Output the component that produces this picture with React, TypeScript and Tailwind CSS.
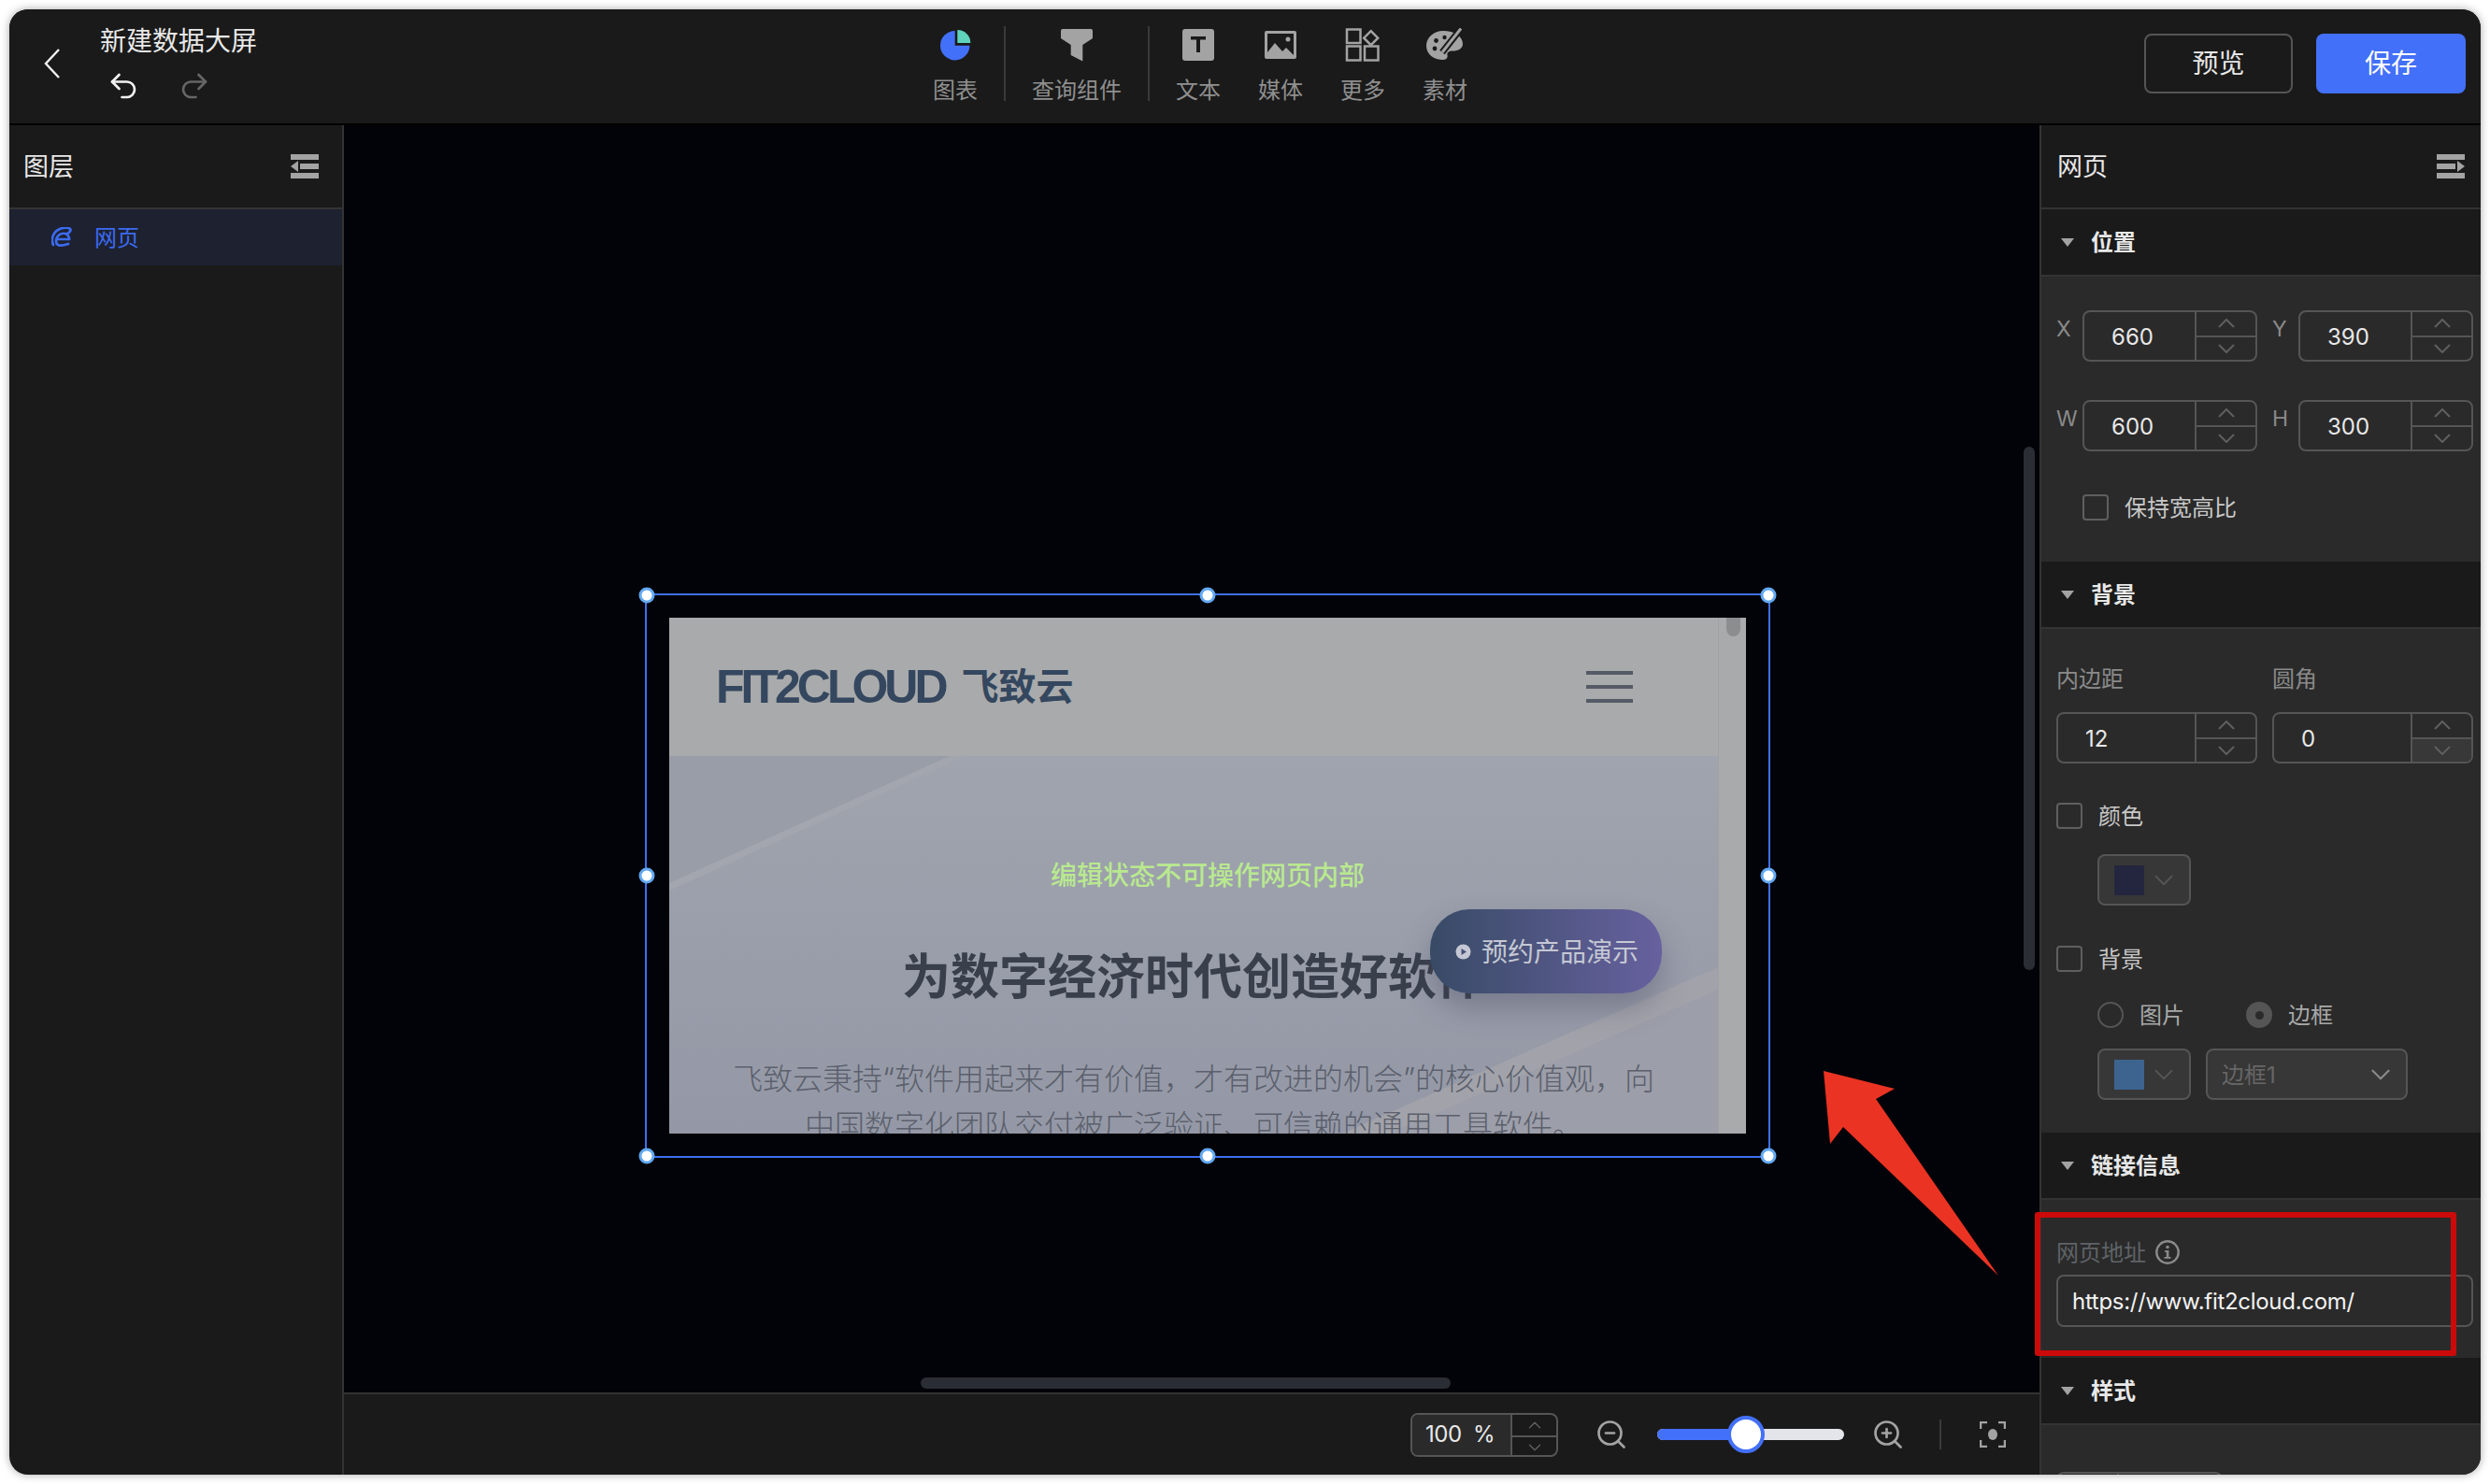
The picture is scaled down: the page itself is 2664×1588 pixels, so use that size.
import type { ReactNode } from 'react'
import { ChevronDown, ChevronUp, Redo2, Undo2, ZoomIn, ZoomOut } from 'lucide-react'

const font = "font-['Inter','Noto_Sans_CJK_SC',sans-serif]"

function ChartIcon() {
  return (
    <svg width="34" height="36" viewBox="0 0 34 36">
      <path d="M16.7 3 A15.7 15.7 0 1 0 32.4 18.7 H16.7 Z" fill="#4370f8" />
      <path d="M19.3 2 A14 14 0 0 1 33.3 16 H19.3 Z" fill="#5fd3bb" />
    </svg>
  )
}

function FunnelIcon() {
  return (
    <svg width="34" height="36" viewBox="0 0 34 36">
      <path d="M2 1 H32 Q34 1 34 3 V11 L23.3 18 V35.5 L10.7 29 V18 L0 11 V3 Q0 1 2 1 Z" fill="#a3a3a3" />
    </svg>
  )
}

function TextIcon() {
  return (
    <svg width="34" height="36" viewBox="0 0 34 36">
      <rect x="0" y="1" width="34" height="34" rx="3" fill="#a3a3a3" />
      <rect x="9" y="9" width="16" height="3.5" fill="#1a1a1a" />
      <rect x="15" y="9" width="4" height="17" fill="#1a1a1a" />
    </svg>
  )
}

function MediaIcon() {
  return (
    <svg width="34" height="36" viewBox="0 0 34 36">
      <rect x="0" y="3" width="34" height="30" rx="2" fill="#a3a3a3" />
      <rect x="3" y="6" width="28" height="24" fill="#1a1a1a" />
      <path d="M3 26 L11 16 L19 25 L23 21 L31 29 V30 H3 Z" fill="#a3a3a3" />
      <circle cx="25" cy="12" r="2.5" fill="#a3a3a3" />
    </svg>
  )
}

function MoreIcon() {
  return (
    <svg width="38" height="36" viewBox="0 0 38 36" fill="none" stroke="#a3a3a3" strokeWidth="2.5">
      <rect x="2" y="1.5" width="14.5" height="14.5" />
      <path d="M27.7 3.2 L35.2 10.7 L27.7 18.2 L20.2 10.7 Z" />
      <rect x="2" y="19.5" width="14.5" height="15" />
      <rect x="21" y="19.5" width="14.5" height="15" />
    </svg>
  )
}

function PaletteIcon() {
  return (
    <svg width="40" height="36" viewBox="0 0 40 36">
      <path d="M18 3 C8 3 0 10 0 19 C0 28 8 34 18 34 C22 34 23 31 22.5 29 C22 26 24 24.5 28 24.5 C34 24.5 39 22 39 17 C39 9 30 3 18 3 Z" fill="#a3a3a3" />
      <circle cx="10.5" cy="13.5" r="2.4" fill="#1a1a1a" />
      <circle cx="9" cy="22" r="2.4" fill="#1a1a1a" />
      <circle cx="19.5" cy="10" r="2.2" fill="#1a1a1a" />
      <path d="M17 26 L36 2" stroke="#1a1a1a" strokeWidth="7" />
      <path d="M17 26 L37 0.5" stroke="#a3a3a3" strokeWidth="3" />
    </svg>
  )
}

function WebIcon() {
  return (
    <svg width="22" height="23" viewBox="0 0 22 23" fill="none" stroke="#3b6bf0" strokeWidth="2.7" strokeLinecap="round">
      <path d="M19 13 C19 8 15 6 11 7 C7 8 5 12 5 15 C5 20 9 21 18 18" />
      <path d="M5.5 13 H19" />
      <path d="M2 19 C-0.5 14 1 6 8 2.5 C12 0.5 18 0 20 2 C21.5 3.5 19 6 17 7" />
    </svg>
  )
}

function InfoIcon() {
  return (
    <svg width="26" height="26" viewBox="0 0 26 26" fill="#8a8a8a" className="ml-[10px]">
      <circle cx="13" cy="13" r="11.7" fill="none" stroke="#8a8a8a" strokeWidth="2.4" />
      <circle cx="13" cy="7.5" r="1.8" />
      <rect x="11.8" y="11" width="2.6" height="8" />
      <rect x="10" y="11" width="3" height="1.8" />
      <rect x="9.5" y="18" width="7" height="1.8" />
    </svg>
  )
}

function LayerIcon({ flip }: { flip?: boolean }) {
  return (
    <svg width="30" height="26" viewBox="0 0 30 26" className={flip ? '-scale-x-100' : ''} fill="#a3a3a3">
      <rect x="0" y="0" width="30" height="6" />
      <rect x="10" y="10" width="20" height="6" />
      <path d="M8 7 V19 L0 13 Z" />
      <rect x="0" y="20" width="30" height="6" />
    </svg>
  )
}

function Chevron({ up }: { up?: boolean }) {
  return (
    <svg width="18" height="10" viewBox="0 0 18 10" fill="none" stroke="#5f5f5f" strokeWidth="2">
      <path d={up ? 'M1 9 L9 1 L17 9' : 'M1 1 L9 9 L17 1'} />
    </svg>
  )
}

function Tool({ icon, label }: { icon: ReactNode; label: string }) {
  return (
    <div className="flex flex-col items-center">
      <div className="flex h-[36px] items-center justify-center">{icon}</div>
      <span className="mt-[15px] text-[24px] leading-[32px] text-[#8f8f8f]">{label}</span>
    </div>
  )
}

function Stepper({ value, className, downActive }: { value: string; className: string; downActive?: boolean }) {
  return (
    <div className={`flex h-[55px] shrink-0 overflow-hidden rounded-lg border-2 border-[#555555] ${className}`}>
      <div className="flex flex-1 items-center pt-[2px] pl-[29px] text-[24px] text-[#e8e8e8]">{value}</div>
      <div className="flex w-[65px] flex-col border-l-2 border-[#555555]">
        <div className="flex flex-1 items-center justify-center border-b-2 border-[#555555]">
          <Chevron up />
        </div>
        <div className={`flex flex-1 items-center justify-center ${downActive ? 'bg-[#383838]' : ''}`}>
          <Chevron />
        </div>
      </div>
    </div>
  )
}

function Field({ label, value }: { label: string; value: string }) {
  return (
    <div className="flex w-[231px] shrink-0">
      <span className="w-[28px] text-[23px] leading-[40px] text-[#8a8a8a]">{label}</span>
      <Stepper value={value} className="w-[187px]" />
    </div>
  )
}

function Section({ title, children }: { title: string; children: ReactNode }) {
  return (
    <section>
      <div className="flex h-[72px] items-center border-b-2 border-[#333333] bg-[#1a1a1a] pl-[21px]">
        <span className="h-0 w-0 border-x-[7px] border-t-[9px] border-x-transparent border-t-[#a3a3a3]" />
        <span className="ml-[18px] pt-[2px] text-[24px] font-bold text-[#e8e8e8]">{title}</span>
      </div>
      <div className="bg-[#2a2a2a] pr-[8px] pl-[16px]">{children}</div>
    </section>
  )
}

function Check({ label }: { label: string }) {
  return (
    <div className="flex h-[32px] items-center">
      <span className="h-[28px] w-[28px] rounded-[4px] border-2 border-[#5f5f5f]" />
      <span className="ml-[17px] pt-[2px] text-[24px] text-[#c8c8c8]">{label}</span>
    </div>
  )
}

function Swatch({ color }: { color: string }) {
  return (
    <div className="flex h-[55px] w-[100px] items-center rounded-lg border-2 border-[#555555] bg-[#373737] pl-[16px]">
      <span className={`h-[32px] w-[32px] ${color}`} />
      <ChevronDown size={34} strokeWidth={1.3} className="ml-[4px] text-[#555555]" />
    </div>
  )
}

function Handle({ className }: { className: string }) {
  return (
    <span className={`absolute h-[17px] w-[17px] -translate-x-1/2 -translate-y-1/2 rounded-full border-[3px] border-[#62a8f2] bg-white ${className}`} />
  )
}

function WebPreview() {
  return (
    <div className="relative flex h-full overflow-hidden bg-[#a9aaab]">
      <div className="flex min-w-0 flex-1 flex-col">
        <div className="flex h-[148px] shrink-0 items-center justify-between bg-[#a9aaab] pr-[91px] pl-[50px]">
          <div className="flex items-center text-[#34475f]">
            <span className="font-['Liberation_Sans',sans-serif] text-[50px] font-bold tracking-[-4px]">FIT2CLOUD</span>
            <span className="ml-[18px] text-[40px] font-bold">飞致云</span>
          </div>
          <div className="flex w-[50px] flex-col gap-[11px]">
            <span className="h-[4px] bg-[#555b66]" />
            <span className="h-[4px] bg-[#555b66]" />
            <span className="h-[4px] bg-[#555b66]" />
          </div>
        </div>
        <div className="relative flex-1 overflow-hidden bg-gradient-to-b from-[#a0a4ae] to-[#9498a6] text-center">
          <svg className="absolute inset-0 h-full w-full" viewBox="0 0 1122 404" preserveAspectRatio="none">
            <path d="M0 0 H300 L0 136 Z" fill="#989da8" />
            <path d="M0 136 L300 0 H316 L0 144 Z" fill="#a3a6ae" />
            <path d="M1122 226 L720 404 H1122 Z" fill="#9c9ea9" />
            <path d="M1122 226 L720 404 H770 L1122 250 Z" fill="#a2a3aa" />
          </svg>
          <div className="relative pt-[201px]">
            <div className="text-[52px] leading-[72px] font-bold whitespace-nowrap text-[#3a3f4c]">为数字经济时代创造好软件</div>
            <div className="mt-[48px] text-[32px] leading-[50px] font-light whitespace-nowrap text-[#5b606c]">
              <div>飞致云秉持“软件用起来才有价值，才有改进的机会”的核心价值观，向</div>
              <div>中国数字化团队交付被广泛验证、可信赖的通用工具软件。</div>
            </div>
          </div>
        </div>
      </div>
      <div className="w-[30px] shrink-0 border-l border-[#a0a1a3] bg-[#a9aaab] pl-[8px]">
        <div className="h-[20px] w-[15px] rounded-b-full bg-[#8c8d8f]" />
      </div>
      <div className="absolute top-[255px] left-0 w-full text-center text-[28px] font-medium text-[#b9e98f]">编辑状态不可操作网页内部</div>
      <div className="absolute top-[312px] left-[814px] flex h-[90px] w-[248px] items-center rounded-[42px] bg-gradient-to-r from-[#384a66] to-[#67619f] pl-[27px] shadow-[0_16px_30px_rgba(60,62,90,0.35)]">
        <svg width="17" height="17" viewBox="0 0 17 17">
          <circle cx="8.5" cy="8.5" r="8" fill="#c5c8d4" />
          <path d="M6.5 5 L12 8.5 L6.5 12 Z" fill="#4a4f78" />
        </svg>
        <span className="ml-[11px] pt-[2px] text-[28px] text-[#c5c8d4]">预约产品演示</span>
      </div>
    </div>
  )
}

export default function App() {
  return (
    <div className={`h-[1588px] w-[2664px] bg-white p-[10px] ${font}`}>
      <div className="relative flex h-[1568px] flex-col overflow-hidden rounded-[20px] bg-[#1a1a1a] text-white shadow-[0_0_10px_rgba(0,0,0,0.35)]">
        <header className="flex h-[124px] shrink-0 border-b-2 border-black bg-[#1a1a1a]">
          <div className="flex w-[988px] shrink-0 pl-[37px]">
            <svg width="17" height="32" viewBox="0 0 17 32" fill="none" stroke="#f2f2f2" strokeWidth="2.4" className="mt-[42px]">
              <path d="M16 1 L2 16 L16 31" />
            </svg>
            <div className="ml-[43px] pt-[16px]">
              <div className="text-[28px] leading-[36px] text-[#e8e8e8]">新建数据大屏</div>
              <div className="mt-[12px] ml-[7px] flex gap-[40px]">
                <Undo2 size={36} strokeWidth={1.8} className="text-[#f2f2f2]" />
                <Redo2 size={36} strokeWidth={1.8} className="text-[#666666]" />
              </div>
            </div>
          </div>
          <div className="flex pt-[20px]">
            <Tool icon={<ChartIcon />} label="图表" />
            <div className="mx-[28px] mt-[-2px] h-[80px] w-[2px] bg-[#3a3a3a]" />
            <Tool icon={<FunnelIcon />} label="查询组件" />
            <div className="mx-[28px] mt-[-2px] h-[80px] w-[2px] bg-[#3a3a3a]" />
            <div className="flex gap-[40px]">
              <Tool icon={<TextIcon />} label="文本" />
              <Tool icon={<MediaIcon />} label="媒体" />
              <Tool icon={<MoreIcon />} label="更多" />
              <Tool icon={<PaletteIcon />} label="素材" />
            </div>
          </div>
          <div className="ml-auto flex gap-[25px] pt-[26px] pr-[16px]">
            <button className="h-[64px] w-[159px] rounded-lg border-2 border-[#555555] text-[28px] text-[#e8e8e8]">预览</button>
            <button className="h-[64px] w-[160px] rounded-lg bg-[#4370f8] text-[28px] text-white">保存</button>
          </div>
        </header>

        <div className="flex min-h-0 flex-1">
          <aside className="w-[358px] shrink-0 border-r-2 border-[#333333]">
            <div className="flex h-[90px] items-center justify-between border-b-2 border-[#333333] pr-[25px] pl-[15px]">
              <span className="pt-[2px] text-[27px] text-[#e8e8e8]">图层</span>
              <LayerIcon />
            </div>
            <div className="flex h-[60px] items-center bg-[#1e2130] pl-[45px] text-[#3b6bf0]">
              <WebIcon />
              <span className="ml-[24px] pt-[2px] text-[24px]">网页</span>
            </div>
          </aside>

          <main className="flex min-w-0 flex-1 flex-col">
            <div className="relative flex-1 overflow-hidden bg-[#020308]">
              <div className="absolute top-[501px] left-[322px] h-[604px] w-[1204px] border-2 border-[#3f6ff0] p-[24px]">
                <WebPreview />
                <Handle className="top-0 left-0" />
                <Handle className="top-0 left-1/2" />
                <Handle className="top-0 left-[1200px]" />
                <Handle className="top-1/2 left-0" />
                <Handle className="top-1/2 left-[1200px]" />
                <Handle className="top-[600px] left-0" />
                <Handle className="top-[600px] left-1/2" />
                <Handle className="top-[600px] left-[1200px]" />
              </div>
              <div className="absolute top-[344px] right-[5px] h-[560px] w-[12px] rounded-full bg-[#2a2d33]" />
              <div className="absolute bottom-[4px] left-[617px] h-[12px] w-[567px] rounded-full bg-[#2a2d33]" />
            </div>
            <div className="flex h-[88px] shrink-0 items-center border-t-2 border-[#333333] pr-[36px] pl-[1141px]">
              <div className="flex h-[47px] w-[158px] overflow-hidden rounded-lg border-2 border-[#555555]">
                <div className="flex flex-1 items-center bg-[#2a2a2a] pl-[14px] text-[24px] tracking-[-0.5px] text-[#e8e8e8]">100&nbsp;&nbsp;%</div>
                <div className="flex w-[49px] flex-col border-l-2 border-[#555555]">
                  <div className="flex flex-1 items-center justify-center border-b-2 border-[#555555]">
                    <ChevronUp size={22} strokeWidth={1.5} className="text-[#5f5f5f]" />
                  </div>
                  <div className="flex flex-1 items-center justify-center">
                    <ChevronDown size={22} strokeWidth={1.5} className="text-[#5f5f5f]" />
                  </div>
                </div>
              </div>
              <ZoomOut size={36} strokeWidth={1.8} className="ml-[39px] text-[#a3a3a3]" />
              <div className="ml-[31px] flex h-[12px] w-[200px] overflow-hidden rounded-full bg-[#e4e5ea]">
                <div className="h-full w-[95px] bg-[#4370f8]" />
              </div>
              <span className="-ml-[125px] h-[40px] w-[40px] shrink-0 rounded-full border-4 border-[#4370f8] bg-white" />
              <ZoomIn size={36} strokeWidth={1.8} className="ml-[114px] text-[#a3a3a3]" />
              <div className="ml-[37px] h-[32px] w-[2px] bg-[#3a3a3a]" />
              <svg width="28" height="28" viewBox="0 0 28 28" fill="none" stroke="#a3a3a3" strokeWidth="2.5" className="ml-auto">
                <path d="M1 8 V1 H8 M20 1 H27 V8 M27 20 V27 H20 M8 27 H1 V20" />
                <ellipse cx="14" cy="14" rx="5" ry="6" fill="#a3a3a3" stroke="none" />
              </svg>
            </div>
          </main>

          <aside className="w-[472px] shrink-0 overflow-hidden border-l-2 border-[#333333]">
            <div className="flex h-[90px] items-center justify-between border-b-2 border-[#333333] pr-[17px] pl-[17px]">
              <span className="pt-[2px] text-[27px] text-[#e8e8e8]">网页</span>
              <LayerIcon flip />
            </div>
            <Section title="位置">
              <div className="pt-[36px] pb-[42px]">
                <div className="flex">
                  <Field label="X" value="660" />
                  <Field label="Y" value="390" />
                </div>
                <div className="mt-[41px] flex">
                  <Field label="W" value="600" />
                  <Field label="H" value="300" />
                </div>
                <div className="mt-[44px] ml-[28px]">
                  <Check label="保持宽高比" />
                </div>
              </div>
            </Section>
            <Section title="背景">
              <div className="pt-[37px] pb-[35px]">
                <div className="flex gap-[16px]">
                  <div className="w-[215px]">
                    <div className="pt-[2px] text-[24px] leading-[30px] text-[#8a8a8a]">内边距</div>
                    <Stepper value="12" className="mt-[20px] w-[215px]" />
                  </div>
                  <div className="w-[215px]">
                    <div className="pt-[2px] text-[24px] leading-[30px] text-[#8a8a8a]">圆角</div>
                    <Stepper value="0" className="mt-[20px] w-[215px]" downActive />
                  </div>
                </div>
                <div className="mt-[40px]">
                  <Check label="颜色" />
                </div>
                <div className="mt-[25px] ml-[44px]">
                  <Swatch color="bg-[#24263f]" />
                </div>
                <div className="mt-[41px]">
                  <Check label="背景" />
                </div>
                <div className="mt-[28px] ml-[44px] flex h-[32px] items-center text-[24px] text-[#a8a8a8]">
                  <span className="h-[28px] w-[28px] rounded-full border-2 border-[#555555]" />
                  <span className="ml-[17px] pt-[2px]">图片</span>
                  <span className="ml-[66px] flex h-[28px] w-[28px] items-center justify-center rounded-full bg-[#555555]">
                    <span className="h-[9px] w-[9px] rounded-full bg-[#2a2a2a]" />
                  </span>
                  <span className="ml-[17px] pt-[2px]">边框</span>
                </div>
                <div className="mt-[20px] ml-[44px] flex gap-[16px]">
                  <Swatch color="bg-[#3c648f]" />
                  <div className="flex h-[55px] w-[216px] items-center justify-between rounded-lg border-2 border-[#555555] bg-[#373737] pr-[10px] pl-[15px] text-[24px] text-[#666666]">
                    <span className="pt-[2px]">边框1</span>
                    <ChevronDown size={34} strokeWidth={1.5} className="text-[#8a8a8a]" />
                  </div>
                </div>
              </div>
            </Section>
            <Section title="链接信息">
              <div className="pt-[40px] pb-[33px]">
                <div className="flex h-[32px] items-center text-[24px] text-[#5f6368]">
                  <span className="pt-[2px]">网页地址</span>
                  <InfoIcon />
                </div>
                <div className="mt-[8px] flex h-[56px] items-center rounded-lg border-2 border-[#555555] pt-[2px] pl-[15px] text-[24px] tracking-[-0.3px] text-[#f2f2f2]">
                  https://www.fit2cloud.com/
                </div>
              </div>
            </Section>
            <Section title="样式">
              <div className="pt-[50px]">
                <div className="flex h-[55px] w-[178px] rounded-lg border-2 border-[#555555]">
                  <div className="w-[65px] border-r-2 border-[#555555]" />
                </div>
              </div>
            </Section>
          </aside>
        </div>

        <div className="absolute top-[1287px] left-[2167px] h-[154px] w-[451px] rounded-[3px] border-[6px] border-[#cc0a0a]" />
        <svg className="absolute top-[1136px] left-[1941px]" width="197" height="229" viewBox="0 0 197 229">
          <polygon points="0,0 76,19 56,30 187,219 21,60 7,78" fill="#ea3323" />
        </svg>
      </div>
    </div>
  )
}
